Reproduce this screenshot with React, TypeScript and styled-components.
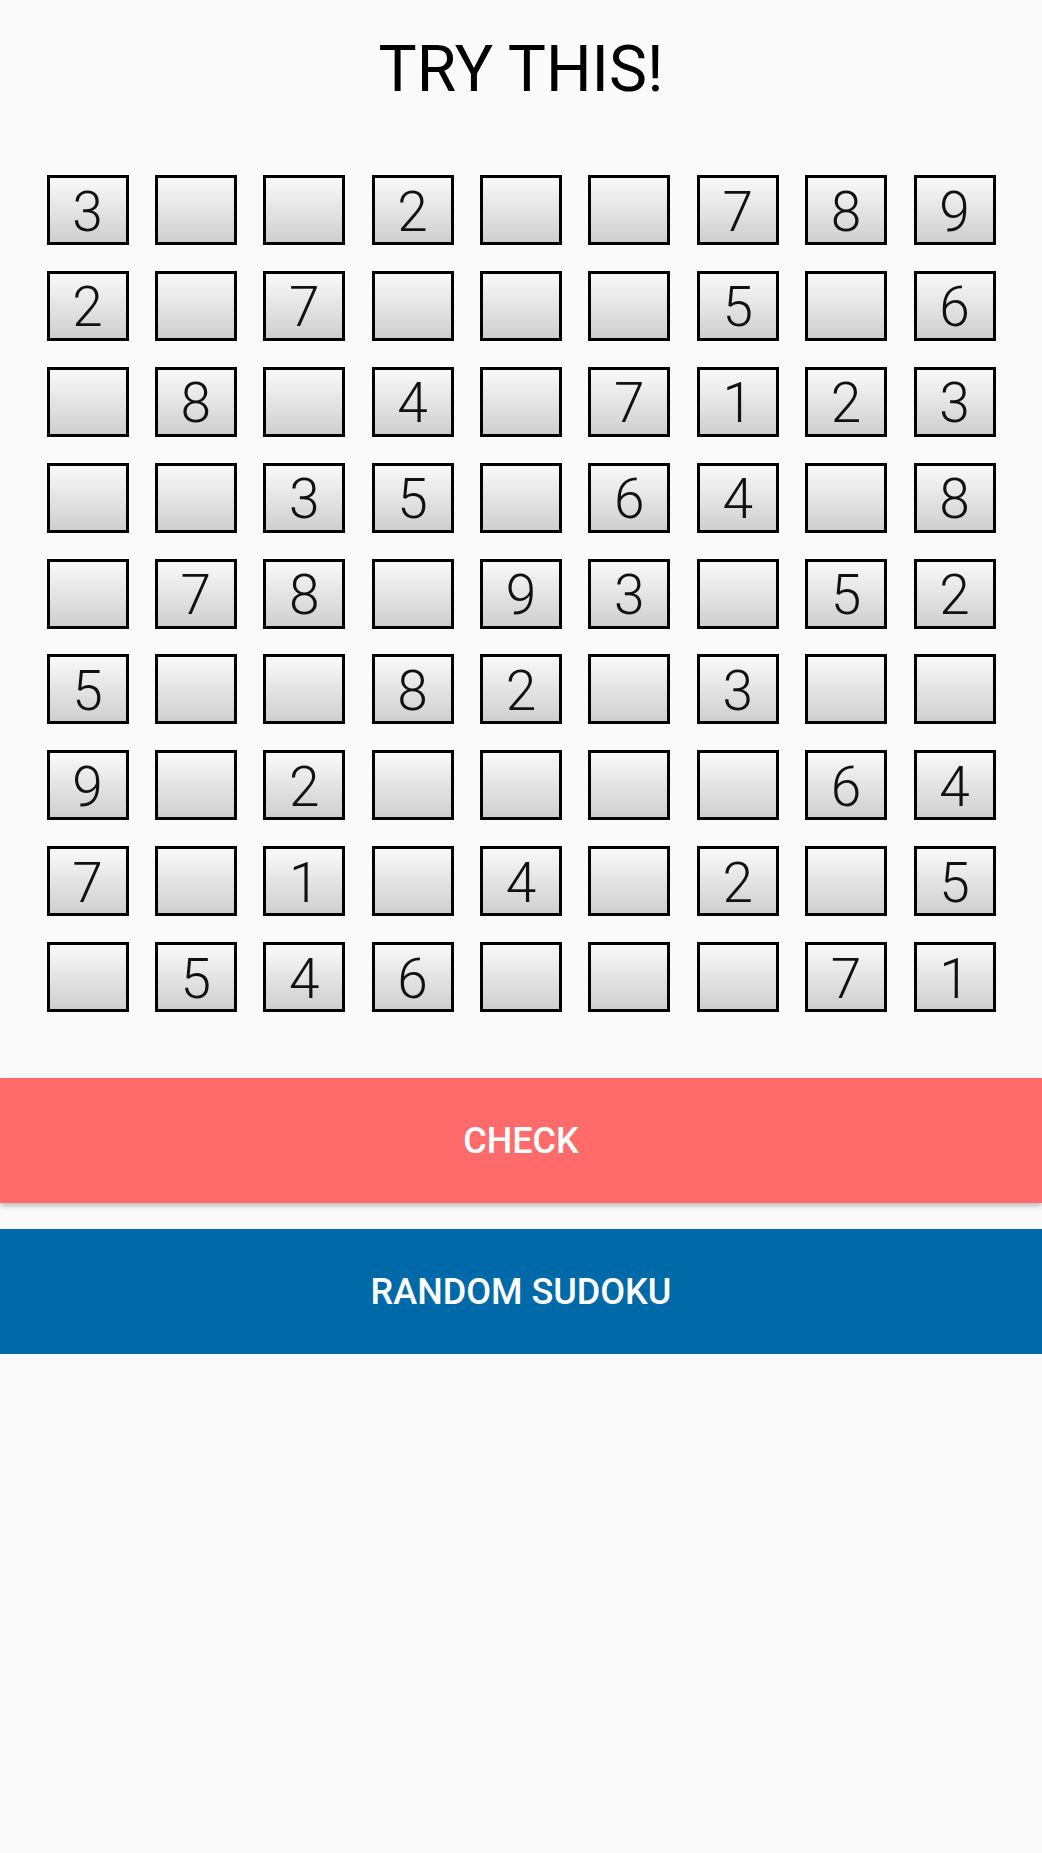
import styled, { createGlobalStyle } from "styled-components";

const GlobalStyle = createGlobalStyle`
  html, body {
    margin: 0;
    padding: 0;
    background: #fafafa;
    font-family: Roboto, "Liberation Sans", sans-serif;
  }
`;

const Page = styled.div`
  width: 100%;
  min-height: 1853px;
  background: #fafafa;
  display: flex;
  flex-direction: column;
`;

const Title = styled.h1`
  margin: 0;
  padding-top: 38px;
  font-size: 64px;
  line-height: 64px;
  font-weight: 400;
  color: #000;
  text-align: center;
`;

const Board = styled.div`
  width: 949px;
  margin: 73px auto 0;
  display: grid;
  grid-template-columns: repeat(9, 82px);
  grid-auto-rows: 70px;
  justify-content: space-between;
  row-gap: 25.9px;
`;

const Cell = styled.div`
  box-sizing: border-box;
  border: 3px solid #000;
  background: linear-gradient(to bottom, #f9f9f9 0%, #cfcfcf 100%);
  display: flex;
  align-items: center;
  justify-content: center;
  padding-top: 3px;
  font-size: 55px;
  font-weight: 300;
  color: #111;
`;

const ActionButton = styled.button<{ $color: string; $shadow?: boolean }>`
  display: block;
  width: 100%;
  height: 125px;
  border: none;
  padding: 0;
  background: ${(p) => p.$color};
  color: #fff;
  font-family: Roboto, "Liberation Sans", sans-serif;
  font-size: 36px;
  font-weight: 500;
  text-transform: uppercase;
  box-shadow: ${(p) => (p.$shadow ? "0 3px 5px rgba(0, 0, 0, 0.25)" : "none")};
`;

const Buttons = styled.div`
  margin-top: 66px;
  display: flex;
  flex-direction: column;
  gap: 26px;
`;

const puzzle = [
  "3..2..789",
  "2.7...5.6",
  ".8.4.7123",
  "..35.64.8",
  ".78.93.52",
  "5..82.3..",
  "9.2....64",
  "7.1.4.2.5",
  ".546...71",
];

const App = () => {
  return (
    <Page>
      <GlobalStyle />
      <Title>TRY THIS!</Title>
      <Board>
        {puzzle.map((row, r) =>
          row.split("").map((ch, c) => (
            <Cell key={`${r}-${c}`}>{ch === "." ? "" : ch}</Cell>
          ))
        )}
      </Board>
      <Buttons>
        <ActionButton $color="#ff6b6b" $shadow>
          Check
        </ActionButton>
        <ActionButton $color="#006aa8">Random Sudoku</ActionButton>
      </Buttons>
    </Page>
  );
};

export default App;
